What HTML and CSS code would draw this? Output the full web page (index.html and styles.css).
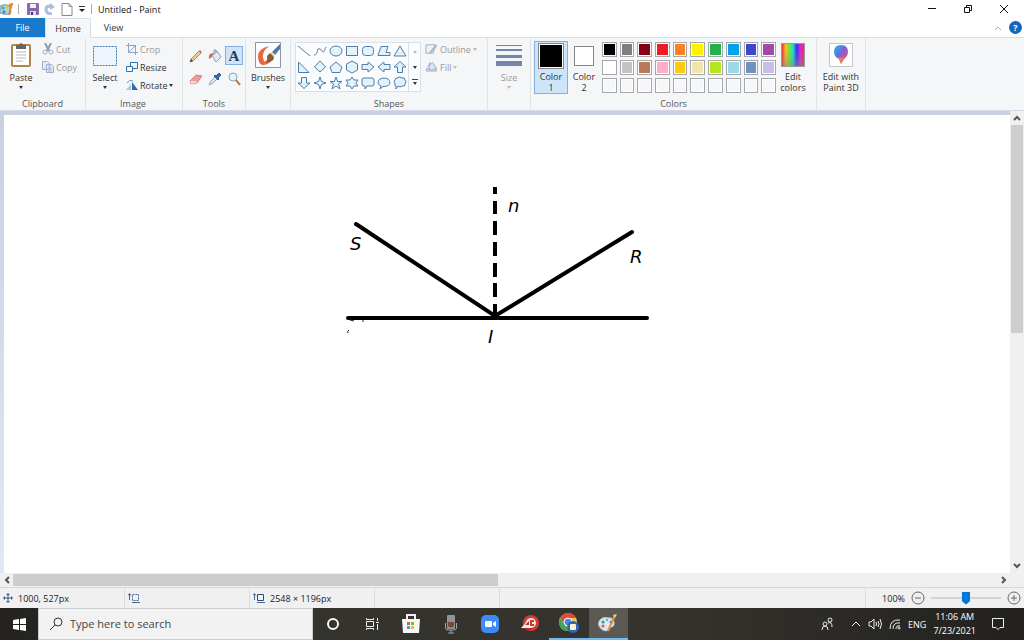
FILE: index.html
```html
<!DOCTYPE html>
<html lang="en">
<head>
    <meta charset="UTF-8">
    <meta name="viewport" content="width=device-width, initial-scale=1.0">
    <title>Untitled - Paint</title>
    <link rel="stylesheet" href="styles.css">
</head>
<body>
    <header class="titlebar">
        <div class="quick">
            <svg width="14" height="16" viewBox="0 0 14 16"><path d="M0 5Q5 2 10 5L11 12Q6 15 0 12Z" fill="#a9d4e8" stroke="#6f9fbd"/><circle cx="3" cy="7" r="1.5" fill="#4fae50"/><circle cx="7" cy="6" r="1.5" fill="#e8bd35"/><circle cx="4" cy="11" r="1.5" fill="#4779c4"/><path d="M12 2L9 14M9 4L13 3" stroke="#df8b2d" stroke-width="2"/></svg>
            <i class="sep"></i>
            <button aria-label="Save"><svg width="12" height="12" viewBox="0 0 12 12"><path d="M.5.5h11v11h-11z" fill="#8666ad" stroke="#8b70ad"/><path d="M3 1h6v4H3z" fill="#f3eef8"/><path d="M3 8h6v4H3z" fill="#ded4ea"/><path d="M4 9h2v3H4z" fill="#4d3374"/></svg></button>
            <button aria-label="Undo"><svg width="12" height="12" viewBox="0 0 12 12"><path d="M8 11Q2 11 2 6Q2 3 6 3H8" fill="none" stroke="#a9bfdc" stroke-width="3"/><path d="M6 0L11 4L6 7Z" fill="#a9bfdc"/></svg></button>
            <button aria-label="New"><svg width="12" height="13" viewBox="0 0 12 13"><path d="M1 .5h7l3 3v9H1z" fill="#fff" stroke="#888"/><path d="M8 .5v3h3" fill="none" stroke="#999"/></svg></button>
            <button aria-label="Customize toolbar"><svg width="8" height="6" viewBox="0 0 8 6"><path d="M1 .5h6" stroke="#333"/><path d="M1 3h6L4 6z" fill="#222"/></svg></button>
            <i class="sep"></i>
        </div>
        <h1>Untitled - Paint</h1>
        <div class="window-buttons">
            <button aria-label="Minimize"><svg width="10" height="10"><path d="M1 4.500h8" stroke="#111"/></svg></button>
            <button aria-label="Restore"><svg width="10" height="10"><path d="M1.500 3.500h5v5h-5zM3.500 3.500v-2h5v5h-2" fill="none" stroke="#111"/></svg></button>
            <button aria-label="Close"><svg width="10" height="10"><path d="M1 1l8 8M9 1L1 9" stroke="#111"/></svg></button>
        </div>
    </header>

    <nav class="tabs">
        <button class="file">File</button>
        <button class="home">Home</button>
        <button class="view">View</button>
        <div class="tab-tools">
            <button aria-label="Collapse ribbon"><svg width="8" height="6"><path d="M1 5l3-3 3 3" fill="none" stroke="#aaa"/></svg></button>
            <button class="help" aria-label="Help">?</button>
        </div>
    </nav>

    <section class="ribbon">
        <div class="group clipboard">
            <div class="tools-row">
                <button class="big"><svg width="22" height="26" viewBox="0 0 22 26"><rect x="2" y="3" width="18" height="21" rx="1" fill="#fff" stroke="#b3834c" stroke-width="2"/><path d="M6 10h10M6 13h10M6 16h10M6 19h7" stroke="#b5bdc8"/><path d="M6 3h3q2-4 4 0h3v4H6z" fill="#666"/></svg>Paste<i class="caret"></i></button>
                <div class="stack">
                    <button class="off"><svg width="12" height="12" viewBox="0 0 12 12"><path d="M3 0l4 8M9 0L5 8" stroke="#8b9bb1" stroke-width="2"/><circle cx="3" cy="9" r="2" fill="none" stroke="#a5b2c7"/><circle cx="9" cy="9" r="2" fill="none" stroke="#a5b2c7"/></svg>Cut</button>
                    <button class="off"><svg width="12" height="12" viewBox="0 0 12 12"><path d="M.5.5h5l2 2v6h-7zM4.500 3.500h5l2 2v6h-7z" fill="#e3eaf5" stroke="#9eb0ce"/><path d="M6 6h3M6 8h4M6 10h4" stroke="#a9bbd9"/></svg>Copy</button>
                </div>
            </div>
            <h2>Clipboard</h2>
        </div>

        <div class="group image">
            <div class="tools-row">
                <button class="big"><svg width="26" height="26" viewBox="0 0 26 26"><rect x="1.500" y="4.500" width="23" height="19" fill="#eef5fc" stroke="#3c78b5" stroke-dasharray="2 1"/></svg>Select<i class="caret"></i></button>
                <div class="stack">
                    <button class="off"><svg width="12" height="12" viewBox="0 0 12 12"><path d="M2.500 0v9.500H12M0 2.500h9.500V12M3 9l7-7" fill="none" stroke="#8fa2bf"/></svg>Crop</button>
                    <button><svg width="12" height="12" viewBox="0 0 12 12"><path d="M4.500 1.500h7v6h-7z" fill="#f5faff" stroke="#2f70b0"/><path d="M.5 5.500h6v5h-6z" fill="#fff" stroke="#2f70b0"/></svg>Resize</button>
                    <button><svg width="12" height="12" viewBox="0 0 12 12"><path d="M0 11l5-6v6z" fill="#a9c5e3"/><path d="M6 11V3l6 8z" fill="#2e6da8"/><path d="M1 4q2-4 6-2" fill="none" stroke="#5b9ed0"/></svg>Rotate<i class="caret"></i></button>
                </div>
            </div>
            <h2>Image</h2>
        </div>

        <div class="group tools">
            <div class="tool-grid">
                <button aria-label="Pencil"><svg width="14" height="14" viewBox="0 0 14 14"><path d="M1 13l1-3 8-8 2 2-8 8z" fill="#e8ce82" stroke="#a38f62"/><path d="M10 2l2 2 1-1-2-2z" fill="#d06f66"/><path d="M1 13l1-3 2 2z" fill="#443"/></svg></button>
                <button aria-label="Fill with color"><svg width="14" height="14" viewBox="0 0 14 14"><path d="M4 6l5-4 4 6-5 5z" fill="#e3eaf3" stroke="#8fa1b8"/><path d="M6 6V1h2v3" fill="none" stroke="#8798ae"/><path d="M5 4Q0 4 1 10L4 8z" fill="#d8695c"/></svg></button>
                <button class="chosen" aria-label="Text">A</button>
                <button aria-label="Eraser"><svg width="14" height="14" viewBox="0 0 14 14"><path d="M1 9l6-6 6 1-5 7-6 1z" fill="#ee9a9a" stroke="#d08080"/><path d="M1 9l6 0 1 2-6 1z" fill="#f9d3d3"/></svg></button>
                <button aria-label="Color picker"><svg width="14" height="14" viewBox="0 0 14 14"><path d="M1 13l2-4 4-4 2 2-4 4z" fill="#d7e7f5" stroke="#8da7c4"/><path d="M6 4l1-1 1 1 3-3 2 2-3 3 1 1-1 1z" fill="#2f69b2" stroke="#365c90"/></svg></button>
                <button aria-label="Magnifier"><svg width="14" height="14" viewBox="0 0 14 14"><circle cx="6" cy="5" r="4" fill="#e6f2fb" stroke="#98a4b0"/><path d="M9 8l4 5" stroke="#a9774f" stroke-width="2"/></svg></button>
            </div>
            <h2>Tools</h2>
        </div>

        <div class="group brushes">
            <button class="big"><svg width="26" height="26" viewBox="0 0 26 26"><path d="M.5.5h25v25H.5z" fill="#fafcff" stroke="#8796a9"/><path d="M14 4Q3 7 3 14q0 7 4 9 7 0 10-5-6 3-8 1Q5 11 14 4Z" fill="#e9683f"/><path d="M25 2L17 10l3 3 5-6z" fill="#5179a1"/><path d="M17 10l3 3-2 2-3-3z" fill="#d6d8d9"/><path d="M15 11l4 4q0 6-9 5 3-2 2-6z" fill="#8f5b33"/></svg>Brushes<i class="caret"></i></button>
        </div>

        <div class="group shapes">
            <div class="shapes-row">
                <div class="gallery">
                    <div class="shape-grid">
                        <button aria-label="Line"><svg viewBox="0 0 16 16"><path d="M2 3l12 10"/></svg></button>
                        <button aria-label="Curve"><svg viewBox="0 0 16 16"><path d="M2 12C7 12 4 4 8 6S10 13 14 4" fill="none"/></svg></button>
                        <button aria-label="Oval"><svg viewBox="0 0 16 16"><ellipse cx="8" cy="8" rx="6" ry="5"/></svg></button>
                        <button aria-label="Rectangle"><svg viewBox="0 0 16 16"><path d="M2.500 3.500h11v9h-11z"/></svg></button>
                        <button aria-label="Rounded rectangle"><svg viewBox="0 0 16 16"><rect x="2.500" y="3.500" width="11" height="9" rx="3"/></svg></button>
                        <button aria-label="Polygon"><svg viewBox="0 0 16 16"><path d="M5 3.500h7l-2 6h4v3H2z"/></svg></button>
                        <button aria-label="Triangle"><svg viewBox="0 0 16 16"><path d="M8 3l6 10H2z"/></svg></button>
                        <button aria-label="Right triangle"><svg viewBox="0 0 16 16"><path d="M2.500 3v10.500H13z"/></svg></button>
                        <button aria-label="Diamond"><svg viewBox="0 0 16 16"><path d="M8 2l5.500 6L8 13 2.500 8z"/></svg></button>
                        <button aria-label="Pentagon"><svg viewBox="0 0 16 16"><path d="M8 3l6 5-2 5.500H4L2 8z"/></svg></button>
                        <button aria-label="Hexagon"><svg viewBox="0 0 16 16"><path d="M8 2l5.500 3v6L8 14l-5.500-3V5z"/></svg></button>
                        <button aria-label="Right arrow"><svg viewBox="0 0 16 16"><path d="M2 5.500h6V3l6 5-6 5v-2.500H2z"/></svg></button>
                        <button aria-label="Left arrow"><svg viewBox="0 0 16 16"><path d="M14 5.500H8V3L2 8l6 5v-2.500h6z"/></svg></button>
                        <button aria-label="Up arrow"><svg viewBox="0 0 16 16"><path d="M5.500 13.500V8H2l6-5.500L14 8h-3.500v5.500z"/></svg></button>
                        <button aria-label="Down arrow"><svg viewBox="0 0 16 16"><path d="M5.500 2.500V8H2l6 5.500L14 8h-3.500V2.500z"/></svg></button>
                        <button aria-label="Four point star"><svg viewBox="0 0 16 16"><path d="M8 2l1.500 4.500L14 8l-4.500 1.500L8 14l-1.500-4.500L2 8l4.500-1.500z"/></svg></button>
                        <button aria-label="Five point star"><svg viewBox="0 0 16 16"><path d="M8 2l1.500 4.500H14L10.500 9l1.500 5-4-3-4 3 1.500-5L2 6.500h4.500z"/></svg></button>
                        <button aria-label="Six point star"><svg viewBox="0 0 16 16"><path d="M8 2l2 3h4l-2 3 2 3h-4l-2 3-2-3H2l2-3-2-3h4z"/></svg></button>
                        <button aria-label="Rounded callout"><svg viewBox="0 0 16 16"><path d="M4 3h8q2 0 2 2v4q0 2-2 2H7l-2 3v-3H4q-2 0-2-2V5q0-2 2-2z"/></svg></button>
                        <button aria-label="Oval callout"><svg viewBox="0 0 16 16"><path d="M5 11Q2 10 2 7.500C2 1.500 14 1.500 14 7.500q0 4-7 4L4 14z"/></svg></button>
                        <button aria-label="Cloud callout"><svg viewBox="0 0 16 16"><path d="M5 3q3-2 5 0 3-1 3 2 2 2 0 4 0 3-3 2-2 2-4 0L4 14v-3q-2 0-1-3-2-2 0-3 0-2 2-2z"/></svg></button>
                    </div>
                    <div class="gallery-scroll">
                        <button aria-label="Row up"><i class="caret up"></i></button>
                        <button aria-label="Row down"><i class="caret"></i></button>
                        <button aria-label="More shapes"><i class="caret more"></i></button>
                    </div>
                </div>
                <div class="stack">
                    <button class="off"><svg width="13" height="12" viewBox="0 0 14 12"><path d="M1 1.500h10l-2 9H1z" fill="#edf1f8" stroke="#9facbe"/><path d="M4 10l8-9 1 2-7 8z" fill="#a8b5c9"/></svg>Outline<i class="caret"></i></button>
                    <button class="off"><svg width="13" height="12" viewBox="0 0 14 12"><path d="M1 7v4h12V7z" fill="#b6c4dc"/><path d="M3 5l5-4 4 6-5 3z" fill="#dbe3ef" stroke="#9facc4"/><path d="M5 5V1" stroke="#96a5bd"/></svg>Fill<i class="caret"></i></button>
                </div>
            </div>
            <h2>Shapes</h2>
        </div>

        <div class="group size">
            <button class="big off"><svg width="26" height="26" viewBox="0 0 26 26" fill="#7487aa"><path d="M0 3h26v1H0zM0 7h26v2H0zM0 13h26v3H0zM0 19h26v5H0z"/></svg>Size<i class="caret"></i></button>
        </div>

        <div class="group colors">
            <div class="colors-row">
                <button class="color-slot chosen"><span class="well black"></span>Color<br>1</button>
                <button class="color-slot second"><span class="well"></span>Color<br>2</button>
                <div class="palette">
                    <button aria-label="Black"></button><button aria-label="Gray"></button><button aria-label="Dark red"></button><button aria-label="Red"></button><button aria-label="Orange"></button><button aria-label="Yellow"></button><button aria-label="Green"></button><button aria-label="Turquoise"></button><button aria-label="Indigo"></button><button aria-label="Purple"></button>
                    <button aria-label="White"></button><button aria-label="Light gray"></button><button aria-label="Brown"></button><button aria-label="Rose"></button><button aria-label="Gold"></button><button aria-label="Light yellow"></button><button aria-label="Lime"></button><button aria-label="Light turquoise"></button><button aria-label="Blue gray"></button><button aria-label="Lavender"></button>
                    <button aria-label="Custom 1"></button><button aria-label="Custom 2"></button><button aria-label="Custom 3"></button><button aria-label="Custom 4"></button><button aria-label="Custom 5"></button><button aria-label="Custom 6"></button><button aria-label="Custom 7"></button><button aria-label="Custom 8"></button><button aria-label="Custom 9"></button><button aria-label="Custom 10"></button>
                </div>
                <button class="big edit"><span class="spectrum"></span><span>Edit<br>colors</span></button>
            </div>
            <h2>Colors</h2>
        </div>

        <div class="group paint3d">
            <button class="big edit"><svg width="24" height="24" viewBox="0 0 24 24"><defs><linearGradient id="drop" x1="0" y1="0" x2="1" y2="1"><stop offset="0" stop-color="#20b9ec"/><stop offset=".45" stop-color="#6a6bd8"/><stop offset=".7" stop-color="#d548a4"/><stop offset="1" stop-color="#f2a23c"/></linearGradient></defs><path d="M.5.5h23v23H.5z" fill="#fff" stroke="#c4c7cc"/><path d="M12 2q7 0 7 7 0 4-4 7l-3 5-2-5q-5-2-5-7 0-7 7-7z" fill="url(#drop)"/><path d="M9 14q4 2 6-1l-3 8z" fill="#ef7b45"/></svg><span>Edit with<br>Paint 3D</span></button>
        </div>
    </section>

    <main class="workspace">
        <div class="canvas">
            <svg class="drawing" width="320" height="180" viewBox="340 180 320 180">
                <g fill="none" stroke="#000" stroke-width="4" stroke-linecap="round">
                    <path d="M348 318H647"/>
                    <path d="M356 224L495 316L632 232"/>
                </g>
                <path d="M495 187v7M495 201v13M495 221v14M495 242v14M495 263v14M495 283v14M495 304v13" stroke="#000" stroke-width="4"/>
                <path d="M350 320l4 1M362 321h2M349 330q-2 1-1 3M497 319h2" stroke="#222" fill="none"/>
                <text x="508" y="212">n</text>
                <text x="350" y="250">S</text>
                <text x="630" y="263">R</text>
                <text x="488" y="343">I</text>
            </svg>
        </div>
        <div class="scroll vertical">
            <button aria-label="Scroll up"><svg width="8" height="8"><path d="M1 6l3-3 3 3" /></svg></button>
            <div class="thumb"></div>
            <button aria-label="Scroll down"><svg width="8" height="8"><path d="M1 2l3 3 3-3"/></svg></button>
        </div>
    </main>
    <div class="scroll horizontal">
        <button aria-label="Scroll left"><svg width="8" height="8"><path d="M6 1L3 4l3 3"/></svg></button>
        <div class="thumb"></div>
        <button aria-label="Scroll right"><svg width="8" height="8"><path d="M2 1l3 3-3 3"/></svg></button>
    </div>

    <footer class="status">
        <div class="cell"><svg width="10" height="10" viewBox="0 0 10 10"><path d="M5 1v8M1 5h8" stroke="#355d86"/><path d="M3 2l2-2 2 2zM3 8l2 2 2-2zM2 3L0 5l2 2zM8 3l2 2-2 2z" fill="#355d86"/></svg>1000, 527px</div>
        <div class="cell"><svg width="12" height="10" viewBox="0 0 12 10"><path d="M4.500 1.500h6v6h-6z" fill="none" stroke="#456b91" stroke-dasharray="2 1"/><path d="M1.500 1v6M4 9.500h8M0 2.500l1.500-2 1.500 2" fill="none" stroke="#456b91"/></svg></div>
        <div class="cell"><svg width="12" height="10" viewBox="0 0 12 10"><path d="M4.500 1.500h6v6h-6z" fill="none" stroke="#294e76"/><path d="M1.500 1v6M4 9.500h8M0 2.500l1.500-2 1.500 2" fill="none" stroke="#456b91"/></svg>2548 × 1196px</div>
        <div class="cell"></div>
        <div class="zoom">
            <label for="zoom">100%</label>
            <button aria-label="Zoom out"><svg width="14" height="14"><circle cx="7" cy="7" r="6"/><path d="M4 7h6"/></svg></button>
            <input type="range" id="zoom" min="0" max="100" value="50">
            <button aria-label="Zoom in"><svg width="14" height="14"><circle cx="7" cy="7" r="6"/><path d="M4 7h6M7 4v6"/></svg></button>
        </div>
    </footer>

    <div class="taskbar">
        <button class="start" aria-label="Start"><svg width="13" height="13" viewBox="0 0 13 13"><path d="M0 2l6-1v5H0zM7 1l6-1v6H7zM0 7h6v5l-6-1zM7 7h6v6l-6-1z" fill="#fff"/></svg></button>
        <div class="search">
            <svg width="14" height="14" viewBox="0 0 14 14"><circle cx="9" cy="5" r="4" fill="none" stroke="#333"/><path d="M6 8l-5 5" stroke="#333"/></svg>
            <input type="text" placeholder="Type here to search" aria-label="Type here to search">
        </div>
        <div class="apps">
            <button aria-label="Cortana"><svg width="14" height="14"><circle cx="7" cy="7" r="5" fill="none" stroke="#f5f5f5" stroke-width="2"/></svg></button>
            <button aria-label="Task view"><svg width="14" height="14" viewBox="0 0 14 14"><path d="M1.500 4.500h7v5h-7zM1.500 1v1.500h7V1M1.500 13v-1.500h7V13M12.500 1v3M12.500 7v6M11 5.500h3" fill="none" stroke="#eee"/></svg></button>
            <button aria-label="Store"><svg width="20" height="20" viewBox="0 0 20 20"><path d="M6 6V1h8v5" fill="none" stroke="#eee" stroke-width="2"/><path d="M1 5h18l-1 14H2z" fill="#f7f7f7"/><path d="M6 8h3v3H6z" fill="#e75934"/><path d="M10 8h3v3h-3z" fill="#76b83f"/><path d="M6 12h3v3H6z" fill="#2fa5dd"/><path d="M10 12h3v3h-3z" fill="#f2b838"/></svg></button>
            <button aria-label="Voice recorder"><svg width="14" height="20" viewBox="0 0 14 20"><rect x="3" y="1" width="8" height="14" rx="1" fill="#8d9396"/><path d="M4 8h6v4q-3 3-6 0z" fill="#7c4535"/><path d="M1.500 9v5q0 2 3 2h5q3 0 3-2V9M7 16v3M4 19h6" stroke="#a0a5a7" fill="none"/></svg></button>
            <button aria-label="Zoom"><svg width="18" height="18" viewBox="0 0 18 18"><rect width="18" height="18" rx="5" fill="#3d8cf5"/><rect x="4" y="6" width="7" height="6" rx="1" fill="#fff"/><path d="M12 8l3-2v6l-3-2z" fill="#fff"/></svg></button>
            <button aria-label="Media"><svg width="18" height="18" viewBox="0 0 18 18"><circle cx="10" cy="8" r="8" fill="#d93835"/><circle cx="10" cy="8" r="5" fill="#f5e9e4"/><path d="M0 13l7-8 3 2v6z" fill="#f4ebe4"/><path d="M4 10l4-4v4z" fill="#b93834"/><path d="M1 13h11l-3 3z" fill="#b92d31"/><path d="M13 6h-3v4h3" stroke="#cf3b3a" stroke-width="2" fill="none"/></svg></button>
            <button class="running" aria-label="Chrome"><svg width="20" height="20" viewBox="0 0 20 20"><circle cx="9" cy="9" r="9" fill="#f0c541"/><path d="M1 5Q4 0 9 0q6 0 8 5H9L5 10z" fill="#df493b"/><path d="M1 5l5 7 4 5-1 1Q0 18 0 9q0-2 1-4z" fill="#40a75a"/><circle cx="9" cy="9" r="4" fill="#4c86e8" stroke="#fff"/><circle cx="14" cy="14" r="6" fill="#2d67bb"/><rect x="11" y="11" width="6" height="6" rx="1" fill="#fff4c9"/></svg></button>
            <button class="running active" aria-label="Paint"><svg width="20" height="20" viewBox="0 0 20 20"><path d="M1 13C-1 7 5 3 10 5q5-1 6 4 1 4-2 5-3 0-3 3-6 3-10-4z" fill="#d9e8f0" stroke="#a9c6d4"/><circle cx="5" cy="9" r="1.5" fill="#2e97aa"/><circle cx="9" cy="7" r="1" fill="#55a855"/><circle cx="5" cy="13" r="1.500" fill="#de5946"/><circle cx="13" cy="9" r="1.500" fill="#5679bc"/><path d="M17 2L10 18" stroke="#df923a" stroke-width="2"/><path d="M15 2l4-1-2 4z" fill="#ecd08a"/></svg></button>
        </div>
        <div class="tray">
            <button class="people" aria-label="People"><svg width="12" height="14" viewBox="0 0 12 14"><circle cx="4" cy="7" r="2"/><circle cx="9" cy="3" r="2"/><path d="M1 13q0-4 3-4t3 4M7 6q4-2 4 4"/></svg></button>
            <button aria-label="Show hidden icons"><svg width="10" height="8"><path d="M1 6l4-4 4 4"/></svg></button>
            <button aria-label="Volume"><svg width="14" height="12" viewBox="0 0 14 12"><path d="M1 4h2l3-3v10L3 8H1zM8 4q1 2 0 4M10 3q2 3 0 6M12 1q3 5 0 10"/></svg></button>
            <button aria-label="Network"><svg width="12" height="12" viewBox="0 0 12 12"><path d="M1 11Q1 1 11 2M4 11Q4 4 11 5M7 11Q7 7 11 8"/><circle cx="10" cy="10" r="1"/></svg></button>
            <button class="lang">ENG</button>
            <button class="clock">11:06 AM<br>7/23/2021</button>
            <button class="notes" aria-label="Notifications"><svg width="14" height="14" viewBox="0 0 14 14"><path d="M1.500 1.500h11v9H9l-2 2-2-2H1.500z"/></svg></button>
        </div>
    </div>
</body>
</html>
```
FILE: styles.css
```css
* {
    box-sizing: border-box;
}
body {
    margin: 0;
    height: 100vh;
    display: flex;
    flex-direction: column;
    overflow: hidden;
    font-family: "Open Sans", "Noto Sans", sans-serif;
    font-size: 9px;
    line-height: 11px;
    color: #333;
    background: #fff;
}
button, input {
    font: inherit;
    color: inherit;
    margin: 0;
    padding: 0;
    border: 0;
    background: none;
}
button {
    display: flex;
    align-items: center;
    justify-content: center;
}
svg {
    flex: none;
}
h1, h2 {
    margin: 0;
    font-size: 9px;
    font-weight: 400;
}

/* title bar */
.titlebar {
    display: flex;
    align-items: center;
    height: 18px;
}
.titlebar h1 {
    color: #111;
    margin-left: 6px;
}
.quick {
    display: flex;
    align-items: center;
    gap: 5px;
}
.quick .sep {
    width: 1px;
    height: 10px;
    background: #aaa;
}
.quick .sep:nth-child(2) {
    margin: 0 3px 0 -1px;
}
.window-buttons {
    display: flex;
    margin-left: auto;
    padding-right: 2px;
}
.window-buttons button {
    width: 36px;
    height: 17px;
}

/* tabs */
.tabs {
    display: flex;
    height: 20px;
    border-bottom: 1px solid #dcdee1;
}
.tabs .file {
    width: 45px;
    height: 19px;
    background: #1979ca;
    color: #fff;
}
.tabs .home {
    width: 46px;
    height: 20px;
    background: #f5f6f7;
    border: 1px solid #dcdee1;
    border-bottom: 0;
}
.tabs .view {
    width: 45px;
}
.tab-tools {
    display: flex;
    align-items: center;
    gap: 7px;
    margin-left: auto;
    padding-right: 2px;
}
.tab-tools .help {
    width: 13px;
    height: 13px;
    border-radius: 50%;
    background: #1467b8;
    color: #fff;
    font-weight: 700;
}

/* ribbon */
.ribbon {
    display: flex;
    height: 73px;
    background: #f5f6f7;
    border-bottom: 1px solid #d5d9e6;
}
.group {
    display: flex;
    flex-direction: column;
    justify-content: space-between;
    padding: 2px 4px 1px;
    border-right: 1px solid #e2e3e5;
}
.group h2 {
    text-align: center;
    color: #555;
}
.clipboard { width: 86px; }
.image { width: 97px; }
.tools { width: 63px; }
.brushes { width: 45px; }
.shapes { width: 197px; }
.size { width: 43px; }
.colors { width: 286px; }
.paint3d { width: 49px; }
.group.image {
    padding-left: 2px;
}
.tools-row {
    display: flex;
    gap: 4px;
}
.big {
    flex-direction: column;
    justify-content: flex-start;
    align-items: center;
    gap: 2px;
    width: 34px;
}
.group > .big {
    align-self: center;
    width: 40px;
}
.big > svg {
    margin: 2px 0;
}
.off {
    color: #999;
}
.caret {
    flex: none;
    border: 2px solid transparent;
    border-top: 3px solid #333;
    border-bottom: 0;
}
.big .caret {
    margin-top: 1px;
}
.off .caret {
    border-top-color: #bbb;
}
.caret.up {
    border-top: 0;
    border-bottom: 3px solid #bbb;
}
.gallery-scroll .more {
    position: relative;
}
.more::before {
    content: "";
    position: absolute;
    left: -3px;
    top: -6px;
    width: 6px;
    height: 1px;
    background: #444;
}
.stack {
    display: flex;
    flex-direction: column;
}
.stack button {
    justify-content: flex-start;
    gap: 2px;
    height: 18px;
}
.tool-grid {
    display: grid;
    grid-template-columns: repeat(3, 18px);
    gap: 4px 1px;
    padding-top: 6px;
}
.tool-grid button {
    height: 19px;
}
.chosen {
    background: #cde4f9;
    border: 1px solid #83b1df;
}
.tool-grid .chosen {
    font: 700 15px/16px "Liberation Serif", serif;
    color: #213c5a;
}
.shapes-row {
    display: flex;
    gap: 4px;
}
.gallery {
    display: flex;
    margin-top: 2px;
    border: 1px solid #dbe0e6;
    background: #fbfcfd;
}
.shape-grid {
    display: grid;
    grid-template-columns: repeat(7, 16px);
    grid-auto-rows: 16px;
}
.shape-grid svg {
    width: 16px;
    height: 16px;
    fill: #e3f3fc;
    stroke: #4f7dab;
}
.gallery-scroll {
    width: 12px;
    border-left: 1px solid #dbe0e6;
}
.gallery-scroll button {
    width: 100%;
    height: 16px;
}

/* colors */
.colors-row {
    display: flex;
    align-items: flex-start;
}
.color-slot {
    flex-direction: column;
    justify-content: flex-start;
    width: 34px;
    height: 53px;
    margin: 1px 0 0 -1px;
}
.color-slot .well {
    width: 26px;
    height: 26px;
    margin: 1px 0 2px;
    border: 1px solid #888;
    outline: 1px solid #fff;
    outline-offset: -2px;
    background: #fff;
}
.well.black {
    background: #000;
}
.second .well {
    width: 20px;
    height: 20px;
    margin: 5px 0;
}
.palette {
    display: grid;
    grid-template-columns: repeat(10, 1fr);
    grid-template-rows: repeat(3, 1fr);
    gap: 3px;
    width: 174px;
    height: 51px;
    margin: 2px 0 0 1px;
}
.palette button {
    border: 1px solid #a5a7aa;
    box-shadow: inset 0 0 0 1px #fff;
}
.palette button:nth-child(1) { background: #000; }
.palette button:nth-child(2) { background: #7f7f7f; }
.palette button:nth-child(3) { background: #880015; }
.palette button:nth-child(4) { background: #ed1c24; }
.palette button:nth-child(5) { background: #ff7f27; }
.palette button:nth-child(6) { background: #fff200; }
.palette button:nth-child(7) { background: #22b14c; }
.palette button:nth-child(8) { background: #00a2e8; }
.palette button:nth-child(9) { background: #3f48cc; }
.palette button:nth-child(10) { background: #a349a4; }
.palette button:nth-child(11) { background: #fff; }
.palette button:nth-child(12) { background: #c3c3c3; }
.palette button:nth-child(13) { background: #b97a57; }
.palette button:nth-child(14) { background: #ffaec9; }
.palette button:nth-child(15) { background: #ffc90e; }
.palette button:nth-child(16) { background: #efe4b0; }
.palette button:nth-child(17) { background: #b5e61d; }
.palette button:nth-child(18) { background: #99d9ea; }
.palette button:nth-child(19) { background: #7092be; }
.palette button:nth-child(20) { background: #c8bfe7; }
.edit {
    gap: 0;
}
.spectrum {
    width: 24px;
    height: 24px;
    margin: 3px 0 4px;
    border: 1px solid #999;
    background: linear-gradient(transparent 30%, #8888), linear-gradient(90deg, #e33, #fb2, #6e3, #2dc, #33e, #d2d, #e33);
}
.paint3d .edit {
    width: 44px;
}
.paint3d .edit svg {
    margin: 3px 0 4px;
}

/* drawing area */
.workspace {
    flex: 1;
    min-height: 0;
    display: flex;
    padding-left: 4px;
    background: linear-gradient(#c9d0e2, #dfe8f3);
}
.canvas {
    flex: 1;
    margin-top: 4px;
    background: #fff;
}
.drawing {
    display: block;
    margin: 65px 0 0 336px;
}
.drawing text {
    font: italic 18px "DejaVu Sans", sans-serif;
}
.scroll {
    display: flex;
    background: #f0f0f0;
}
.scroll path {
    fill: none;
    stroke: #555;
    stroke-width: 2;
}
.scroll .thumb {
    background: #cdcdcd;
}
.vertical {
    flex-direction: column;
    width: 14px;
    padding: 0 1px;
}
.vertical button {
    height: 14px;
}
.vertical .thumb {
    height: 45%;
    margin-bottom: auto;
}
.vertical .thumb, .horizontal .thumb {
    flex: none;
}
.horizontal {
    height: 14px;
    padding: 1px 14px 1px 0;
}
.horizontal button {
    width: 13px;
}
.horizontal .thumb {
    width: 48%;
    margin-right: auto;
}

/* status bar */
.status {
    display: flex;
    height: 21px;
    background: #f0f0f0;
    border-top: 1px solid #d9d9d9;
    color: #222;
}
.cell {
    display: flex;
    align-items: center;
    gap: 5px;
    width: 125px;
    padding-left: 3px;
    border-right: 1px solid #dcdcdc;
}
.zoom {
    display: flex;
    align-items: center;
    gap: 6px;
    margin-left: auto;
    padding: 0 3px 0 16px;
    border-left: 1px solid #dcdcdc;
}
.zoom circle, .zoom path {
    fill: none;
    stroke: #666;
}
.zoom input {
    appearance: none;
    width: 70px;
    height: 14px;
    background: linear-gradient(#d3d3d3, #d3d3d3) center / 100% 2px no-repeat;
}
.zoom input::-webkit-slider-thumb {
    appearance: none;
    width: 8px;
    height: 13px;
    background: #0078d7;
    clip-path: polygon(0 0, 100% 0, 100% 75%, 50% 100%, 0 75%);
}

/* taskbar */
.taskbar {
    display: flex;
    height: 32px;
    background: linear-gradient(90deg, #242321, #35332d 30%, #35332d 65%, #22211f);
    color: #fff;
}
.start {
    width: 38px;
}
.search {
    display: flex;
    align-items: center;
    gap: 7px;
    width: 275px;
    padding-left: 10px;
    background: #f2f2f2;
    border: 1px solid #ccc;
}
.search input {
    flex: 1;
    min-width: 0;
    font-size: 11px;
    line-height: 16px;
    color: #333;
}
.search input::placeholder {
    color: #444;
    opacity: 1;
}
.apps {
    display: grid;
    grid-template-columns: repeat(8, 1fr);
    width: 315px;
}
.running {
    border-bottom: 2px solid #76b9ed;
}
.active {
    background: #5a5954;
}
.tray {
    display: flex;
    align-items: center;
    gap: 7px;
    margin-left: auto;
    padding-right: 19px;
}
.tray svg {
    fill: none;
    stroke: #eee;
}
.tray .people {
    margin-right: 11px;
}
.tray .clock {
    line-height: 14px;
}
.tray .notes {
    margin-left: 8px;
}
```
